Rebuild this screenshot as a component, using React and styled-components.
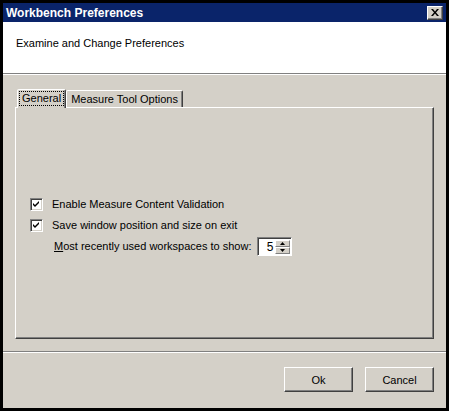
import React, { useState } from "react"
import styled, { createGlobalStyle } from "styled-components"

const face = "#d4d0c8"
const shadow = "#808080"
const darkShadow = "#404040"
const uiFont = `"Liberation Sans", Arial, sans-serif`

const GlobalStyle = createGlobalStyle`
    html, body {
        margin: 0;
        padding: 0;
        background: #fff;
    }
`

const Window = styled.div`
    width: 449px;
    height: 411px;
    box-sizing: border-box;
    border: 3px solid #000;
    background: ${face};
    display: flex;
    flex-direction: column;
    font-family: ${uiFont};
    font-size: 11px;
    color: #000;
`

const TitleBar = styled.div`
    height: 19px;
    background: #0a246a;
    display: flex;
    align-items: center;
    justify-content: space-between;
    padding: 0 3px 0 3px;
    color: #fff;
    font-weight: bold;
    font-size: 12px;
`

const CloseButton = styled.div`
    width: 16px;
    height: 14px;
    box-sizing: border-box;
    background: ${face};
    border: 1px solid;
    border-color: #fff ${darkShadow} ${darkShadow} #fff;
    box-shadow: inset -1px -1px 0 ${shadow};
    display: flex;
    align-items: center;
    justify-content: center;
`

const Header = styled.div`
    height: 52px;
    background: #fff;
    border-bottom: 1px solid ${shadow};
    box-shadow: 0 1px 0 #fff;
    padding: 15px 0 0 13px;
    box-sizing: border-box;
    font-size: 11px;
`

const Content = styled.div`
    flex: 1;
    display: flex;
    flex-direction: column;
    padding: 14px 12px 0 12px;
`

const TabStrip = styled.div`
    display: flex;
    align-items: flex-end;
    height: 19px;
    padding-left: 2px;
    position: relative;
    z-index: 1;
`

const Tab = styled.div`
    box-sizing: border-box;
    height: ${(p) => (p.$active ? "19px" : "17px")};
    margin-bottom: ${(p) => (p.$active ? "-1px" : "0")};
    padding: ${(p) => (p.$active ? "2px 2px 0" : "2px 4px 0")};
    background: ${face};
    border: 1px solid;
    border-bottom: none;
    border-color: #fff ${darkShadow} transparent #fff;
    box-shadow: inset -1px 0 0 ${shadow};
    border-radius: 2px 2px 0 0;
    font-size: 11px;
    line-height: 13px;
    white-space: nowrap;
`

const FocusLabel = styled.span`
    display: inline-block;
    outline: 1px dotted #000;
    padding: 0 2px;
`

const TabPanel = styled.div`
    height: 232px;
    box-sizing: border-box;
    border: 1px solid;
    border-color: #fff ${darkShadow} ${darkShadow} #fff;
    box-shadow: inset -1px -1px 0 ${shadow};
    padding: 88px 0 0 14px;
    display: flex;
    flex-direction: column;
    gap: 5px;
`

const Row = styled.label`
    display: flex;
    align-items: center;
    gap: 9px;
    height: 16px;
    line-height: 16px;
    font-size: 11px;
`

const Box = styled.span`
    width: 13px;
    height: 13px;
    box-sizing: border-box;
    background: #fff;
    border: 1px solid;
    border-color: ${shadow} #fff #fff ${shadow};
    box-shadow: inset 1px 1px 0 ${darkShadow}, inset -1px -1px 0 ${face};
    display: flex;
    align-items: center;
    justify-content: center;
`

const SpinRow = styled.div`
    display: flex;
    align-items: center;
    gap: 6px;
    height: 18px;
    line-height: 16px;
    margin-top: -1px;
    font-size: 11px;
    padding-left: 24px;
`

const SpinBox = styled.div`
    width: 35px;
    height: 19px;
    box-sizing: border-box;
    background: #fff;
    border: 1px solid;
    border-color: ${shadow} #fff #fff ${shadow};
    box-shadow: inset 1px 1px 0 ${darkShadow};
    display: flex;
    align-items: stretch;
    padding: 2px 1px 1px 2px;
`

const SpinValue = styled.div`
    flex: 1;
    text-align: right;
    padding-right: 2px;
    font-size: 12px;
    line-height: 14px;
`

const SpinButtons = styled.div`
    width: 15px;
    display: flex;
    flex-direction: column;
`

const SpinArrow = styled.div`
    flex: 1;
    box-sizing: border-box;
    background: ${face};
    border: 1px solid;
    border-color: #fff ${shadow} ${shadow} #fff;
    display: flex;
    align-items: center;
    justify-content: center;
`

const Divider = styled.div`
    margin: 12px -12px 0 -12px;
    border-top: 1px solid ${shadow};
    border-bottom: 1px solid #fff;
`

const ButtonBar = styled.div`
    display: flex;
    justify-content: flex-end;
    gap: 12px;
    padding-top: 14px;
`

const Button = styled.button`
    width: 69px;
    height: 25px;
    box-sizing: border-box;
    background: ${face};
    border: 1px solid;
    border-color: #fff ${darkShadow} ${darkShadow} #fff;
    box-shadow: inset -1px -1px 0 ${shadow};
    font-family: ${uiFont};
    font-size: 11px;
    color: #000;
    padding: 0;
`

const Check = () => (
    <svg width="7" height="7" viewBox="0 0 7 7">
        <path d="M0 2 L2 4 L6 0 L6 2 L2 6 L0 4 Z" fill="#000" />
    </svg>
)

const Arrow = ({ up }) => (
    <svg width="5" height="3" viewBox="0 0 5 3">
        <path d={up ? "M2.5 0 L5 3 L0 3 Z" : "M0 0 L5 0 L2.5 3 Z"} fill="#000" />
    </svg>
)

export default function App() {
    const [tab, setTab] = useState("general")

    return (
        <>
            <GlobalStyle />
            <Window>
                <TitleBar>
                    <span>Workbench Preferences</span>
                    <CloseButton>
                        <svg width="8" height="7" viewBox="0 0 8 7">
                            <path d="M0 0 L2 0 L4 2.5 L6 0 L8 0 L5 3.5 L8 7 L6 7 L4 4.5 L2 7 L0 7 L3 3.5 Z" fill="#000" />
                        </svg>
                    </CloseButton>
                </TitleBar>
                <Header>Examine and Change Preferences</Header>
                <Content>
                    <TabStrip>
                        <Tab $active={tab === "general"} onClick={() => setTab("general")}>
                            <FocusLabel>General</FocusLabel>
                        </Tab>
                        <Tab $active={tab === "measure"} onClick={() => setTab("measure")}>
                            Measure Tool Options
                        </Tab>
                    </TabStrip>
                    <TabPanel>
                        <Row>
                            <Box><Check /></Box>
                            Enable Measure Content Validation
                        </Row>
                        <Row>
                            <Box><Check /></Box>
                            Save window position and size on exit
                        </Row>
                        <SpinRow>
                            <span><u>M</u>ost recently used workspaces to show:</span>
                            <SpinBox>
                                <SpinValue>5</SpinValue>
                                <SpinButtons>
                                    <SpinArrow><Arrow up /></SpinArrow>
                                    <SpinArrow><Arrow /></SpinArrow>
                                </SpinButtons>
                            </SpinBox>
                        </SpinRow>
                    </TabPanel>
                    <Divider />
                    <ButtonBar>
                        <Button>Ok</Button>
                        <Button>Cancel</Button>
                    </ButtonBar>
                </Content>
            </Window>
        </>
    )
}
